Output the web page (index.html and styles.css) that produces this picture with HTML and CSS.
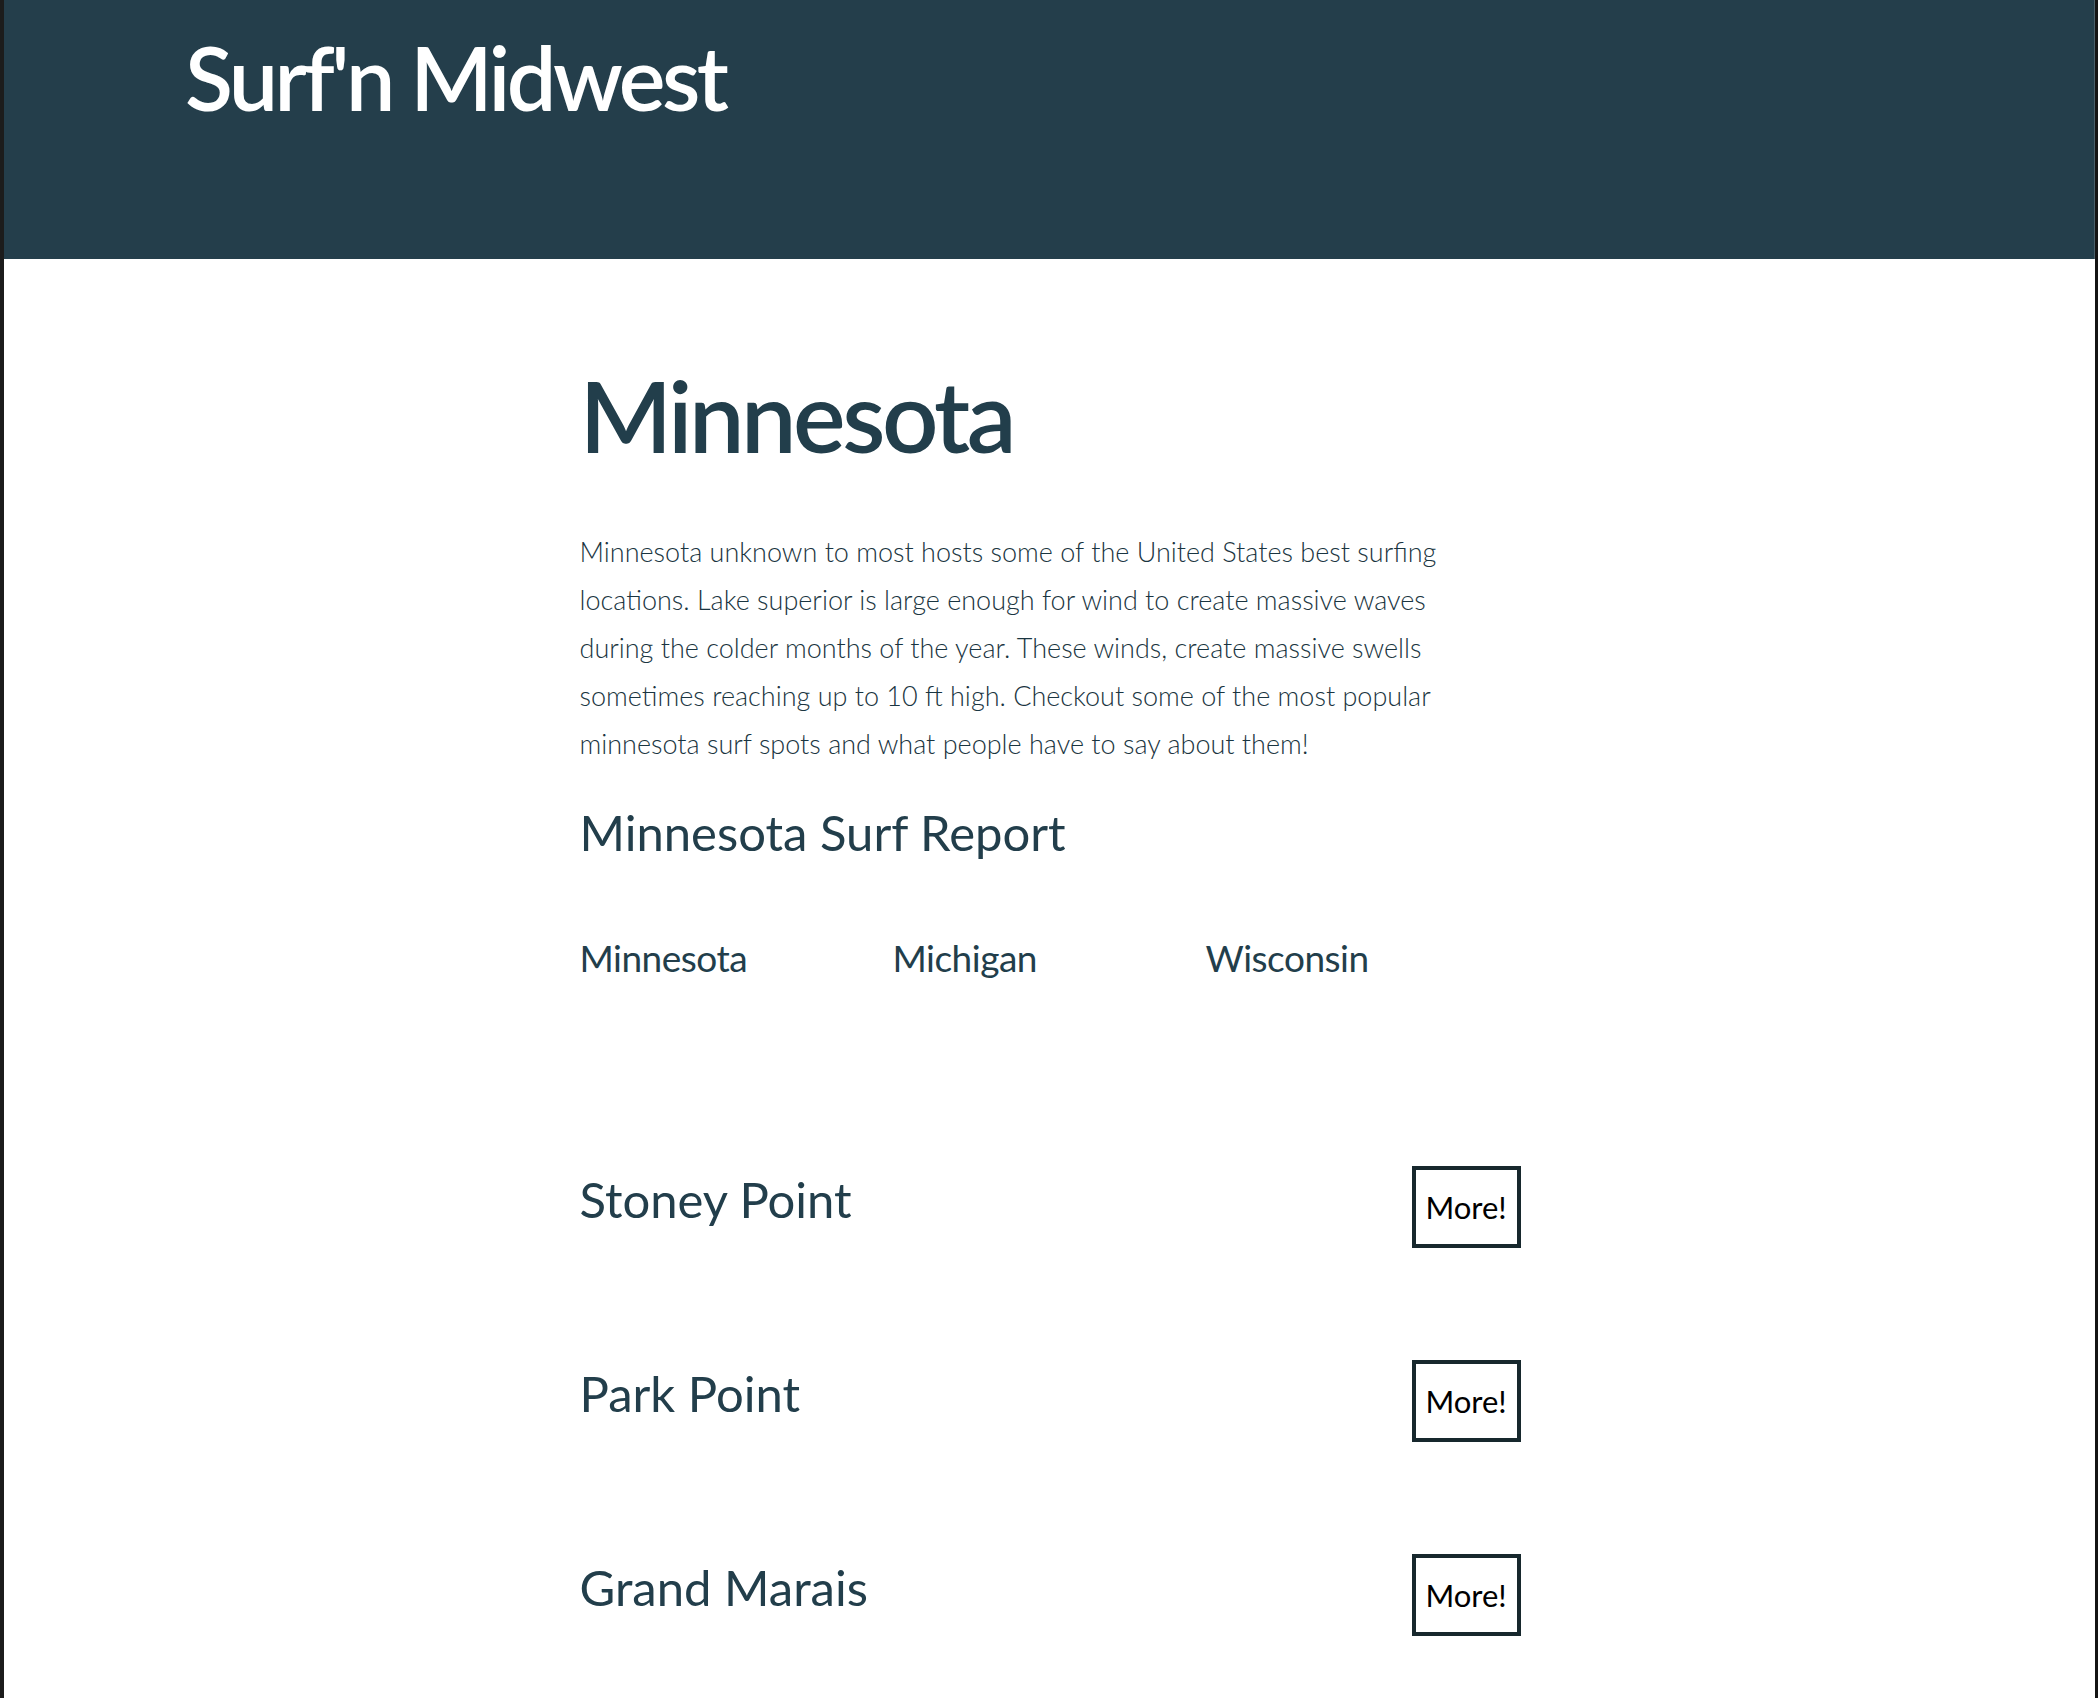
FILE: index.html
```html
<!DOCTYPE html>
<html lang="en">
<head>
<meta charset="utf-8">
<title>Surf'n Midwest</title>
<link rel="stylesheet" href="styles.css">
</head>
<body>
<header class="site-header">
  <div class="brand">Surf'n Midwest</div>
</header>
<main class="content">
  <h1 class="state-title">Minnesota</h1>
  <p class="intro">Minnesota unknown to most hosts some of the United States best surfing locations. Lake superior is large enough for wind to create massive waves during the colder months of the year. These winds, create massive swells sometimes reaching up to 10 ft high. Checkout some of the most popular minnesota surf spots and what people have to say about them!</p>
  <h2 class="report-title">Minnesota Surf Report</h2>
  <nav class="state-nav">
    <a class="state-link">Minnesota</a>
    <a class="state-link">Michigan</a>
    <a class="state-link">Wisconsin</a>
  </nav>
  <section class="spots">
    <div class="spot">
      <h3 class="spot-name">Stoney Point</h3>
      <button class="more-btn">More!</button>
    </div>
    <div class="spot">
      <h3 class="spot-name">Park Point</h3>
      <button class="more-btn">More!</button>
    </div>
    <div class="spot">
      <h3 class="spot-name">Grand Marais</h3>
      <button class="more-btn">More!</button>
    </div>
  </section>
</main>
</body>
</html>
```
FILE: styles.css
```css
html, body {
  margin: 0;
  padding: 0;
}
body {
  background: #ffffff;
  border-left: 4px solid #1c1c1c;
  border-right: 3px solid #141414;
  min-height: 1698px;
  box-sizing: border-box;
  font-family: Lato, "Noto Sans", sans-serif;
  color: #223e4b;
}
.site-header {
  background: #243e4b;
  height: 259px;
  box-sizing: border-box;
  padding: 33px 0 0 181px;
  border-right: 1px solid #4b5f69;
}
.brand {
  color: #ffffff;
  font-size: 88px;
  line-height: 1;
  font-weight: 600;
  letter-spacing: -3.5px;
}
.content {
  width: 940px;
  margin: 0 auto;
  padding-bottom: 40px;
}
.state-title {
  margin: 106px 0 0;
  font-size: 99px;
  line-height: 1;
  font-weight: 600;
  letter-spacing: -3.5px;
}
.intro {
  margin: 64px 0 0;
  width: 890px;
  font-size: 27px;
  line-height: 48px;
  font-weight: 300;
  color: #1a3541;
}
.report-title {
  margin: 40px 0 0;
  font-size: 49px;
  line-height: 1;
  font-weight: 400;
}
.state-nav {
  margin-top: 82px;
  display: grid;
  grid-template-columns: repeat(3, 313px);
}
.state-link {
  font-size: 37px;
  line-height: 1;
  letter-spacing: -0.5px;
  color: #223e4b;
}
.spots {
  margin-top: 190px;
  display: flex;
  flex-direction: column;
  gap: 112px;
}
.spot {
  display: flex;
  justify-content: space-between;
  align-items: flex-start;
}
.spot-name {
  margin: 9px 0 0;
  font-size: 49px;
  line-height: 1;
  font-weight: 400;
}
.more-btn {
  width: 109px;
  height: 82px;
  border: 4px solid #17282d;
  background: #ffffff;
  color: #000000;
  font-family: Lato, "Noto Sans", sans-serif;
  font-size: 31px;
  padding: 0;
  margin-right: -1px;
}
```
